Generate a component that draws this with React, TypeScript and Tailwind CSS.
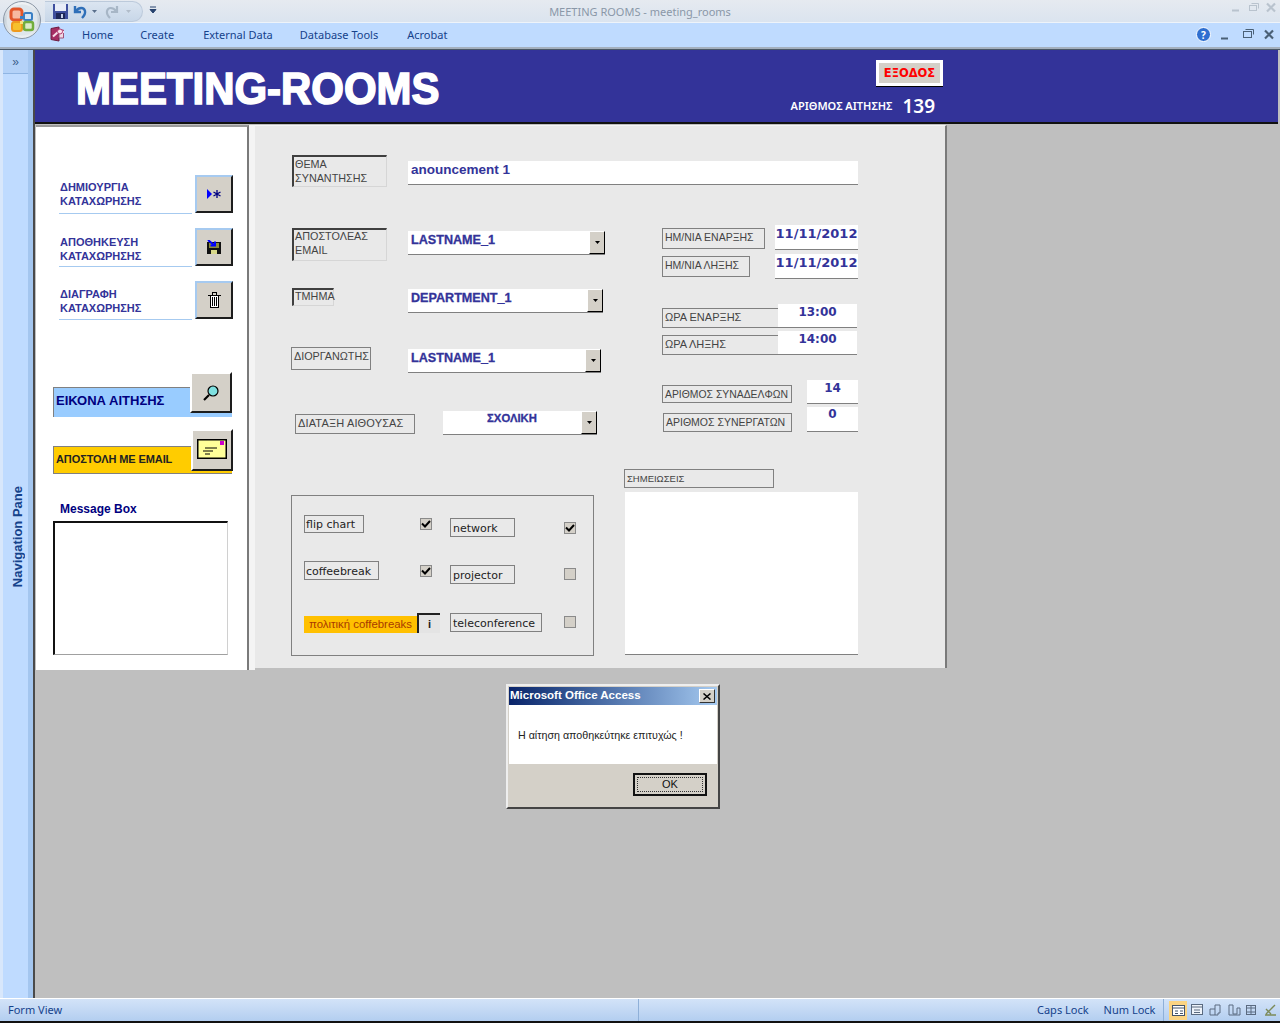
import type { ReactNode } from 'react';

const OfficeButton = () => (
  <svg width="44" height="44" viewBox="0 0 44 44" className="absolute left-0 top-0">
    <defs>
      <linearGradient id="ring" x1="0" y1="0" x2="0" y2="1">
        <stop offset="0" stopColor="#f4f6f8" />
        <stop offset="0.5" stopColor="#c9d2da" />
        <stop offset="1" stopColor="#eef2f5" />
      </linearGradient>
    </defs>
    <circle cx="22" cy="20" r="18.500" fill="url(#ring)" stroke="#8b97a6" />
    <circle cx="22" cy="20" r="15.500" fill="#dfe6ec" />
    <rect x="11" y="9" width="11" height="11" rx="3" fill="#f7b9a0" stroke="#e2562a" strokeWidth="3" />
    <rect x="24" y="13" width="8" height="7" rx="1.500" fill="#d3e4f5" stroke="#3a7fc4" strokeWidth="2" />
    <rect x="12" y="22" width="10" height="9" rx="2.500" fill="#f6c12c" stroke="#ef9a1e" strokeWidth="2" />
    <rect x="24" y="22" width="9" height="8" rx="2" fill="#dcebc8" stroke="#72ad3c" strokeWidth="2.500" />
    <rect x="20" y="16" width="3" height="3" fill="#3a7fc4" />
    <rect x="20" y="21" width="3" height="3" fill="#f6e07a" />
  </svg>
);

const SaveIcon = () => (
  <svg width="15" height="15" viewBox="0 0 15 15" className="shrink-0">
    <rect x="0" y="0" width="15" height="15" fill="#3e4f9e" />
    <rect x="2" y="0" width="11" height="7" fill="#e8edf8" />
    <rect x="3" y="9" width="9" height="6" fill="#1d2758" />
    <rect x="8" y="10" width="2" height="4" fill="#c6d0ea" />
  </svg>
);

const QuickBar = () => (
  <div className="absolute left-[45px] top-[1px] flex h-[21px] w-[98px] items-center rounded-r-full border border-l-0 border-[#bccadb] bg-gradient-to-b from-[#dbe5f1] to-[#c8d7e8] pl-[8px]">
    <SaveIcon />
    <svg width="26" height="16" viewBox="0 0 26 16" className="ml-[4px] shrink-0">
      <path d="M3 2v6h6M4 7c3-4 8-4 9 0 .6 3-1 5-3 7" fill="none" stroke="#2f6fb8" strokeWidth="2.400" />
      <path d="M20 6h5l-2.500 3z" fill="#5a6f8c" />
    </svg>
    <svg width="28" height="16" viewBox="0 0 28 16" className="ml-[6px] shrink-0">
      <path d="M13 2v6H7M12 7C9 3 4 3 3 7c-.6 3 1 5 3 7" fill="none" stroke="#a7b6c6" strokeWidth="2.200" />
      <path d="M22 6h5l-2.500 3z" fill="#b1bcc9" />
    </svg>
  </div>
);

const Sunken = ({ className, children }: { className: string; children: ReactNode }) => (
  <div className={`box-border shrink-0 border-t-2 border-l-2 border-r border-b border-t-[#3f3f3f] border-l-[#3f3f3f] border-r-[#d6d6d6] border-b-[#d6d6d6] pl-[1px] text-[10.800px] leading-[14px] text-[#444] ${className}`}>
    {children}
  </div>
);

const Framed = ({ className, children }: { className: string; children: ReactNode }) => (
  <div className={`box-border shrink-0 whitespace-nowrap border border-[#808080] pl-[2px] text-[#444] ${className}`}>
    {children}
  </div>
);

const Combo = ({ className, textClass, children }: { className: string; textClass: string; children: ReactNode }) => (
  <div className={`box-border flex h-[24px] shrink-0 border-b border-[#808080] bg-white ${className}`}>
    <div className={`flex-1 font-bold text-[#333399] [-webkit-text-stroke:0.3px_#333399] ${textClass}`}>{children}</div>
    <div className="flex w-[16px] items-center justify-center border-t border-l border-t-white border-l-white border-r border-b border-r-black border-b-black bg-[#d4d0c8]">
      <svg width="5" height="3" viewBox="0 0 5 3"><path d="M0 0h5L2.500 3z" fill="#000" /></svg>
    </div>
  </div>
);

const Value = ({ className, children }: { className: string; children: ReactNode }) => (
  <div className={`box-border shrink-0 border-b border-[#808080] bg-white text-center font-['DejaVu_Sans',sans-serif] font-bold text-[#333399] ${className}`}>
    {children}
  </div>
);

const RaisedButton = ({ className, children }: { className: string; children: ReactNode }) => (
  <div className={`box-border flex items-center justify-center border-t-2 border-l-2 border-r-2 border-b-2 border-r-[#1d1d1d] border-b-[#1d1d1d] bg-[#d4d0c8] ${className}`}>
    {children}
  </div>
);

const SideAction = ({ rowClass, labelClass, lines, icon }: { rowClass: string; labelClass: string; lines: string[]; icon: ReactNode }) => (
  <div className={`ml-[23px] flex ${rowClass}`}>
    <div className={`box-border h-[39px] w-[133px] border-b border-[#a6caf0] text-[11px] font-bold leading-[14px] text-[#333399] ${labelClass}`}>
      {lines.map((l) => (
        <div key={l} className="pl-[1px]">{l}</div>
      ))}
    </div>
    <RaisedButton className="ml-[3px] h-[38px] w-[38px] border-t-[#a6caf0] border-l-[#a6caf0]">{icon}</RaisedButton>
  </div>
);

const CheckBox = ({ checked, className }: { checked?: boolean; className: string }) => (
  <div className={`box-border flex h-[12px] w-[12px] shrink-0 items-center justify-center border border-[#8a8a8a] bg-[#d4d0c8] ${className}`}>
    {checked && (
      <svg width="10" height="8" viewBox="0 0 10 8"><path d="M1 3.500l3 3 5-5.500" fill="none" stroke="#000" strokeWidth="2" /></svg>
    )}
  </div>
);

const OptLabel = ({ className, children }: { className: string; children: ReactNode }) => (
  <div className={`box-border shrink-0 whitespace-nowrap border border-[#808080] font-['DejaVu_Sans',sans-serif] text-[11px] text-[#222] ${className}`}>
    {children}
  </div>
);

const ViewButtons = () => (
  <div className="flex h-full items-center">
    <div className="flex h-[19px] w-[18px] items-center justify-center bg-[#fbd483]">
      <svg width="13" height="11" viewBox="0 0 13 11" fill="none" stroke="#44546a"><rect x=".5" y=".5" width="12" height="10" fill="#fff" /><path d="M.5 3h12M3 6h3M3 8.500h3M8 6h3M8 8.500h3" /></svg>
    </div>
    <svg width="92" height="14" viewBox="0 0 92 14" fill="none" stroke="#5a6a80" className="ml-[1px]">
      <rect x="3.500" y="1.500" width="11" height="10" fill="#eef3fa" />
      <path d="M3.500 4h11M6 7h6M6 9.500h6" />
      <path d="M22 6h5V2h5v8h-2v2h-8zM27 6v6" />
      <path d="M41 2h4v9h4V5h3v7H41z" />
      <rect x="58.500" y="2.500" width="9" height="9" />
      <path d="M58 5h10M58 9h10M63 2v10" />
      <path d="M77 12h11M78 11l9-9M78 6l5 5" stroke="#7c8a58" strokeWidth="1.400" />
    </svg>
  </div>
);

export default function App() {
  return (
    <div className="relative flex h-[1023px] w-[1280px] flex-col overflow-hidden bg-[#bfbfbf] font-['Liberation_Sans',sans-serif]">
      {/* window chrome */}
      <div className="relative h-[23px] shrink-0 border-b border-[#eef3f9] bg-gradient-to-b from-[#e6eaf0] to-[#dbe4ef]">
        <QuickBar />
        <svg width="8" height="8" viewBox="0 0 8 8" className="absolute left-[149px] top-[6px]"><path d="M1 1h6M1 3.500h6L4 7z" stroke="#26426e" fill="#26426e" /></svg>
        <div className="pt-[4px] text-center font-['Noto_Sans',sans-serif] text-[11px] leading-[15px] text-[#8a97a8]">
          MEETING ROOMS - meeting_rooms
        </div>
        <svg width="46" height="14" viewBox="0 0 46 14" fill="none" stroke="#b9c3ce" className="absolute left-[1231px] top-[2px]">
          <path d="M1 8.500h7" strokeWidth="2" />
          <rect x="18.500" y="3.500" width="7" height="5" />
          <path d="M20.500 1.500h7v5" />
          <path d="M36 1.500l8 8M44 1.500l-8 8" strokeWidth="2.200" />
        </svg>
      </div>
      <div className="relative flex h-[24px] shrink-0 items-center bg-[#bfdbff] pl-[82px] font-['Noto_Sans',sans-serif] text-[11px] text-[#15428b]">
        <span>Home</span>
        <span className="ml-[27px]">Create</span>
        <span className="ml-[29px]">External Data</span>
        <span className="ml-[27px]">Database Tools</span>
        <span className="ml-[29px]">Acrobat</span>
        <svg width="16" height="16" viewBox="0 0 16 16" className="absolute left-[49px] top-[3px]">
          <path d="M2 2.500l8-1.500v14l-8-1.500z" fill="#a62d63" stroke="#6d1c42" />
          <path d="M10 4h4.500v8H10z" fill="#f0d9e3" stroke="#a0527a" />
          <path d="M4 10.500l5-4.500h6" fill="none" stroke="#f6dbe7" strokeWidth="2" />
          <circle cx="11" cy="5.500" r="2.500" fill="#f9e3ec" stroke="#b33a70" />
        </svg>
        <div className="absolute left-[1196px] top-[4px] flex items-center">
          <div className="mr-[9px] flex h-[15px] w-[15px] items-center justify-center rounded-full border border-white bg-[#2f6fd0] text-[10px] font-bold leading-none text-white">?</div>
          <svg width="56" height="14" viewBox="0 0 56 14" fill="none" stroke="#4a6076">
            <path d="M1 10.500h7" strokeWidth="2" />
            <rect x="23.500" y="3.500" width="8" height="6" />
            <path d="M25.500 1.500h8v5" />
            <path d="M45 2.500l8 8M53 2.500l-8 8" strokeWidth="2.200" />
          </svg>
        </div>
      </div>
      <div className="h-[3px] shrink-0 border-b border-[#4a5868] bg-[#a4b0be]" />

      <OfficeButton />

      <div className="flex min-h-0 flex-1">
        {/* navigation pane */}
        <div className="flex w-[35px] shrink-0 border-r-2 border-[#4a4a4a] bg-[#d8e7fb]">
          <div className="ml-[3px] flex w-[25px] flex-col bg-[#bfdbff]">
            <div className="flex h-[24px] items-center justify-center border-b border-[#8fb5e3] bg-[#b4d2f8] text-[12px] leading-none text-[#3d5f8c]">»</div>
            <div className="ml-[3px] mt-[412px] rotate-180 text-[13px] font-bold leading-[24px] text-[#15428b] [writing-mode:vertical-rl]">
              Navigation Pane
            </div>
          </div>
          <div className="w-[5px] bg-[#a4c6ef]" />
        </div>

        <div className="min-w-0 flex-1 pr-[2px]">
          {/* form header */}
          <div className="flex h-[74px] justify-between border-b-2 border-[#111] bg-[#333399]">
            <div className="ml-[41px] mt-[14px] w-fit origin-left scale-x-[0.953] whitespace-nowrap text-[44px] font-bold leading-[50px] text-white [-webkit-text-stroke:1.600px_white]">
              MEETING-ROOMS
            </div>
            <div className="mr-[335px] flex flex-col items-end pt-[10px]">
              <div className="box-border flex h-[26px] w-[67px] items-center justify-center border-[3px] border-white bg-[#d4d0c8] pt-[1px] font-['DejaVu_Sans',sans-serif] text-[11.500px] font-bold text-[#ff0000] shadow-[0_1px_0_#000]">
                ΕΞΟΔΟΣ
              </div>
              <div className="mr-[8px] mt-[8px] flex items-center font-['Noto_Sans',sans-serif] text-white">
                <span className="pt-[1px] text-[11px] font-semibold">ΑΡΙΘΜΟΣ ΑΙΤΗΣΗΣ</span>
                <span className="ml-[10px] text-[19px] font-semibold leading-[24px]">139</span>
              </div>
            </div>
          </div>

          <div className="flex pt-[1px]">
            {/* left action panel */}
            <div className="ml-[1px] box-border h-[545px] w-[213px] shrink-0 border-t-2 border-r-2 border-t-[#9a9a9a] border-r-[#7a7a7a] bg-white pt-[48px]">
              <SideAction
                rowClass=""
                labelClass="pt-[5px]"
                lines={['ΔΗΜΙΟΥΡΓΙΑ', 'ΚΑΤΑΧΩΡΗΣΗΣ']}
                icon={
                  <svg width="16" height="10" viewBox="0 0 16 10">
                    <path d="M1 0l5 5-5 5z" fill="#0000ff" />
                    <path d="M11 1v8M7.500 3l7 4M14.500 3l-7 4" stroke="#000080" strokeWidth="1.300" />
                  </svg>
                }
              />
              <SideAction
                rowClass="mt-[14px]"
                labelClass="pt-[7px]"
                lines={['ΑΠΟΘΗΚΕΥΣΗ', 'ΚΑΤΑΧΩΡΗΣΗΣ']}
                icon={
                  <svg width="14" height="14" viewBox="0 0 14 14">
                    <path d="M0 2h14v12H0z" fill="#111" />
                    <path d="M2 3h10v5H2z" fill="#8a8a3a" />
                    <path d="M4 10h6v4H4z" fill="#d8d88a" />
                    <path d="M1 0l6 5M3.500 5.500H8V1.500" stroke="#0000ff" strokeWidth="2" fill="none" />
                  </svg>
                }
              />
              <SideAction
                rowClass="mt-[14px]"
                labelClass="pt-[6px]"
                lines={['ΔΙΑΓΡΑΦΗ', 'ΚΑΤΑΧΩΡΗΣΗΣ']}
                icon={
                  <svg width="13" height="16" viewBox="0 0 13 16" fill="none" stroke="#000" shapeRendering="crispEdges">
                    <path d="M0 3.500h13M4.500 3V.5h4V3" />
                    <path d="M2.500 3.500v12h8v-12z" fill="#fff" />
                    <path d="M4.500 5v9M6.500 5v9M8.500 5v9" />
                  </svg>
                }
              />

              <div className="relative ml-[17px] mt-[52px] h-[45px] w-[179px] pt-[15px]">
                <div className="box-border flex h-[30px] items-center border-t border-l border-[#808080] bg-[#99ccff] pb-[3px] pl-[2px] text-[13px] font-bold text-[#000080]">
                  ΕΙΚΟΝΑ ΑΙΤΗΣΗΣ
                </div>
                <RaisedButton className="absolute right-0 top-0 h-[41px] w-[42px] border-t-white border-l-white">
                  <svg width="18" height="18" viewBox="0 0 18 18" fill="none">
                    <circle cx="11" cy="7" r="5" fill="#7fe0e0" stroke="#000" strokeWidth="1.200" />
                    <path d="M7 11l-5 5" stroke="#000" strokeWidth="2.200" />
                  </svg>
                </RaisedButton>
              </div>

              <div className="relative ml-[17px] mt-[12px] h-[45px] w-[179px] pt-[17px]">
                <div className="box-border flex h-[28px] items-center border-t border-l border-b border-[#808080] bg-[#ffcc00] pb-[2px] pl-[2px] text-[11px] font-bold tracking-[-0.100px] text-[#222]">
                  ΑΠΟΣΤΟΛΗ ΜΕ EMAIL
                </div>
                <RaisedButton className="absolute -right-[1px] top-0 h-[42px] w-[42px] border-t-white border-l-white pb-[2px]">
                  <svg width="30" height="20" viewBox="0 0 30 20">
                    <rect x=".75" y=".75" width="28.500" height="18.500" fill="#ffff99" stroke="#000" strokeWidth="1.500" />
                    <rect x="23" y="2" width="4" height="4" fill="#cc00cc" />
                    <path d="M8 9h12M6 12h10M8 15h5" stroke="#000" />
                  </svg>
                </RaisedButton>
              </div>

              <div className="ml-[24px] mt-[28px] text-[12px] font-bold leading-[14px] text-[#000080]">Message Box</div>
              <div className="ml-[17px] mt-[5px] box-border h-[134px] w-[175px] border-t-2 border-l-2 border-t-[#111] border-l-[#111] border-r border-b border-r-[#d0d0d0] border-b-[#a0a0a0] bg-white" />
            </div>

            <div className="w-[6px] shrink-0 bg-[#f4f4f4]" />

            {/* main form */}
            <div className="box-border h-[543px] w-[692px] shrink-0 border-r-2 border-[#7a7a7a] border-t border-t-[#f5f5f5] bg-[#e9e9e9] pt-[29px]">
              <div className="flex">
                <Sunken className="ml-[37px] h-[32px] w-[95px]">
                  ΘΕΜΑ
                  <br />
                  ΣΥΝΑΝΤΗΣΗΣ
                </Sunken>
                <div className="ml-[21px] mt-[6px] box-border h-[24px] w-[450px] border-b border-[#808080] bg-white pl-[3px] text-[13.500px] font-bold leading-[17px] text-[#333399]">
                  anouncement 1
                </div>
              </div>

              <div className="mt-[38px] flex">
                <div className="ml-[36px] w-[371px] shrink-0">
                  <div className="flex pt-[3px]">
                    <Sunken className="ml-[1px] h-[33px] w-[95px]">
                      <div className="-mt-[1px]">
                        ΑΠΟΣΤΟΛΕΑΣ
                        <br />
                        EMAIL
                      </div>
                    </Sunken>
                    <Combo className="ml-[21px] mt-[3px] w-[197px]" textClass="pl-[3px] text-[12.600px] leading-[19px]">LASTNAME_1</Combo>
                  </div>
                  <div className="mt-[27px] flex">
                    <Sunken className="ml-[1px] h-[18px] w-[42px]">
                      <div className="-mt-[1px]">ΤΜΗΜΑ</div>
                    </Sunken>
                    <Combo className="ml-[74px] mt-[1px] w-[195px]" textClass="pl-[3px] text-[12.600px] leading-[19px]">DEPARTMENT_1</Combo>
                  </div>
                  <div className="mt-[34px] flex">
                    <Framed className="h-[23px] w-[80px] text-[10.800px] leading-[16px]">ΔΙΟΡΓΑΝΩΤΗΣ</Framed>
                    <Combo className="ml-[37px] mt-[2px] w-[193px]" textClass="pl-[3px] text-[12.600px] leading-[19px]">LASTNAME_1</Combo>
                  </div>
                  <div className="mt-[38px] flex">
                    <Framed className="ml-[4px] mt-[3px] h-[20px] w-[120px] text-[11px] leading-[16px] tracking-[0.150px]">ΔΙΑΤΑΞΗ ΑΙΘΟΥΣΑΣ</Framed>
                    <Combo className="ml-[28px] w-[154px]" textClass="text-center text-[11.300px] leading-[14px]">ΣΧΟΛΙΚΗ</Combo>
                  </div>
                </div>

                <div className="w-[200px] shrink-0">
                  <div className="flex">
                    <Framed className="mt-[3px] h-[21px] w-[103px] text-[10.500px] leading-[16px]">ΗΜ/ΝΙΑ ΕΝΑΡΞΗΣ</Framed>
                    <Value className="ml-[10px] h-[25px] w-[83px] text-[13px] leading-[17px]">11/11/2012</Value>
                  </div>
                  <div className="mt-[4px] flex">
                    <Framed className="mt-[2px] h-[21px] w-[88px] text-[10.500px] leading-[16px]">ΗΜ/ΝΙΑ ΛΗΞΗΣ</Framed>
                    <Value className="ml-[25px] h-[25px] w-[83px] text-[13px] leading-[17px]">11/11/2012</Value>
                  </div>
                  <div className="mt-[25px] flex">
                    <Framed className="mt-[4px] h-[20px] w-[116px] border-r-0 text-[11px] leading-[16px]">ΩΡΑ ΕΝΑΡΞΗΣ</Framed>
                    <Value className="h-[24px] w-[79px] text-[12px] leading-[17px]">13:00</Value>
                  </div>
                  <div className="mt-[3px] flex">
                    <Framed className="mt-[4px] h-[20px] w-[116px] border-r-0 text-[11px] leading-[16px]">ΩΡΑ ΛΗΞΗΣ</Framed>
                    <Value className="h-[24px] w-[79px] text-[12px] leading-[17px]">14:00</Value>
                  </div>
                  <div className="mt-[25px] flex">
                    <Framed className="mt-[5px] h-[18px] w-[130px] text-[10.400px] leading-[18px]">ΑΡΙΘΜΟΣ ΣΥΝΑΔΕΛΦΩΝ</Framed>
                    <Value className="ml-[15px] h-[24px] w-[51px] text-[12px] leading-[17px]">14</Value>
                  </div>
                  <div className="mt-[3px] flex">
                    <Framed className="ml-[1px] mt-[6px] h-[19px] w-[129px] text-[10.500px] leading-[17px]">ΑΡΙΘΜΟΣ ΣΥΝΕΡΓΑΤΩΝ</Framed>
                    <Value className="ml-[15px] h-[25px] w-[51px] text-[12px] leading-[14px]">0</Value>
                  </div>
                </div>
              </div>

              <div className="mt-[34px] flex">
                {/* equipment options */}
                <div className="ml-[36px] mt-[26px] box-border flex h-[161px] w-[303px] shrink-0 border border-[#808080] pl-[12px] pt-[19px]">
                  <div className="w-[146px] shrink-0">
                    <div className="flex">
                      <OptLabel className="h-[18px] w-[60px] pl-[1px] leading-[18px]">flip chart</OptLabel>
                      <CheckBox checked className="ml-[56px] mt-[3px]" />
                    </div>
                    <div className="mt-[28px] flex">
                      <OptLabel className="h-[19px] w-[75px] pl-[1px] leading-[20px]">coffeebreak</OptLabel>
                      <CheckBox checked className="ml-[41px] mt-[4px]" />
                    </div>
                    <div className="mt-[33px] flex">
                      <div className="mt-[3px] h-[17px] w-[113px] shrink-0 whitespace-nowrap bg-[#ffc000] pl-[5px] text-[11.400px] leading-[17px] text-[#a83a00]">πολιτική coffebreaks</div>
                      <div className="box-border h-[20px] w-[23px] border-t-2 border-l-2 border-t-[#222] border-l-[#222] bg-[#e4e4e4] text-center text-[11px] font-bold leading-[18px] text-[#222]">i</div>
                    </div>
                  </div>
                  <div className="pt-[3px]">
                    <div className="flex">
                      <OptLabel className="h-[19px] w-[65px] pl-[2px] leading-[20px]">network</OptLabel>
                      <CheckBox checked className="ml-[49px] mt-[4px]" />
                    </div>
                    <div className="mt-[28px] flex">
                      <OptLabel className="h-[19px] w-[65px] pl-[2px] leading-[20px]">projector</OptLabel>
                      <CheckBox className="ml-[49px] mt-[3px]" />
                    </div>
                    <div className="mt-[29px] flex">
                      <OptLabel className="h-[19px] w-[92px] pl-[2px] leading-[20px]">teleconference</OptLabel>
                      <CheckBox className="ml-[22px] mt-[3px]" />
                    </div>
                  </div>
                </div>

                <div className="ml-[30px]">
                  <Framed className="h-[19px] w-[150px] pl-[1px] text-[9.500px] leading-[17px]">ΣΗΜΕΙΩΣΕΙΣ</Framed>
                  <div className="ml-[1px] mt-[4px] box-border h-[163px] w-[233px] border-b border-[#808080] bg-white" />
                </div>
              </div>
            </div>
          </div>
        </div>
      </div>

      {/* status bar */}
      <div className="box-border flex h-[25px] shrink-0 items-center whitespace-nowrap border-t border-b-2 border-t-white border-b-[#111] bg-gradient-to-b from-[#d3e3f8] to-[#b3cef0] pl-[8px] font-['Noto_Sans',sans-serif] text-[11px] text-[#15428b]">
        <span className="w-[630px] shrink-0">Form View</span>
        <div className="h-full w-px shrink-0 bg-[#8fb0d8]" />
        <span className="ml-[398px]">Caps Lock</span>
        <span className="ml-[15px]">Num Lock</span>
        <div className="ml-[8px] h-full shrink-0 border-l border-[#8fb0d8] pl-[5px]">
          <ViewButtons />
        </div>
      </div>

      {/* message dialog */}
      <div className="absolute left-[506px] top-[684px] box-border flex h-[125px] w-[214px] flex-col border-2 border-t-[#eee] border-l-[#eee] border-r-[#444] border-b-[#444] bg-[#d4d0c8] p-[1px]">
        <div className="flex h-[18px] shrink-0 items-center justify-between bg-gradient-to-r from-[#0a246a] to-[#a6caf0] pl-[1px] pr-[2px] text-[11.500px] font-bold text-white">
          <span>Microsoft Office Access</span>
          <div className="box-border flex h-[14px] w-[16px] items-center justify-center border border-t-white border-l-white border-r-[#333] border-b-[#333] bg-[#d4d0c8]">
            <svg width="8" height="7" viewBox="0 0 8 7"><path d="M.5.5l7 6M7.500.5l-7 6" stroke="#000" strokeWidth="1.500" /></svg>
          </div>
        </div>
        <div className="box-border h-[59px] shrink-0 bg-white pl-[9px] pt-[23px] text-[10.700px] leading-[14px] text-[#222]">
          Η αίτηση αποθηκεύτηκε επιτυχώς !
        </div>
        <div className="flex flex-1 items-start justify-end pr-[10px] pt-[9px]">
          <div className="box-border flex h-[23px] w-[74px] items-center justify-center border-2 border-[#111] bg-[#d4d0c8] p-[2px]">
            <div className="flex h-full w-full items-center justify-center border border-dotted border-[#333] text-[11px] text-[#111]">OK</div>
          </div>
        </div>
      </div>
    </div>
  );
}
